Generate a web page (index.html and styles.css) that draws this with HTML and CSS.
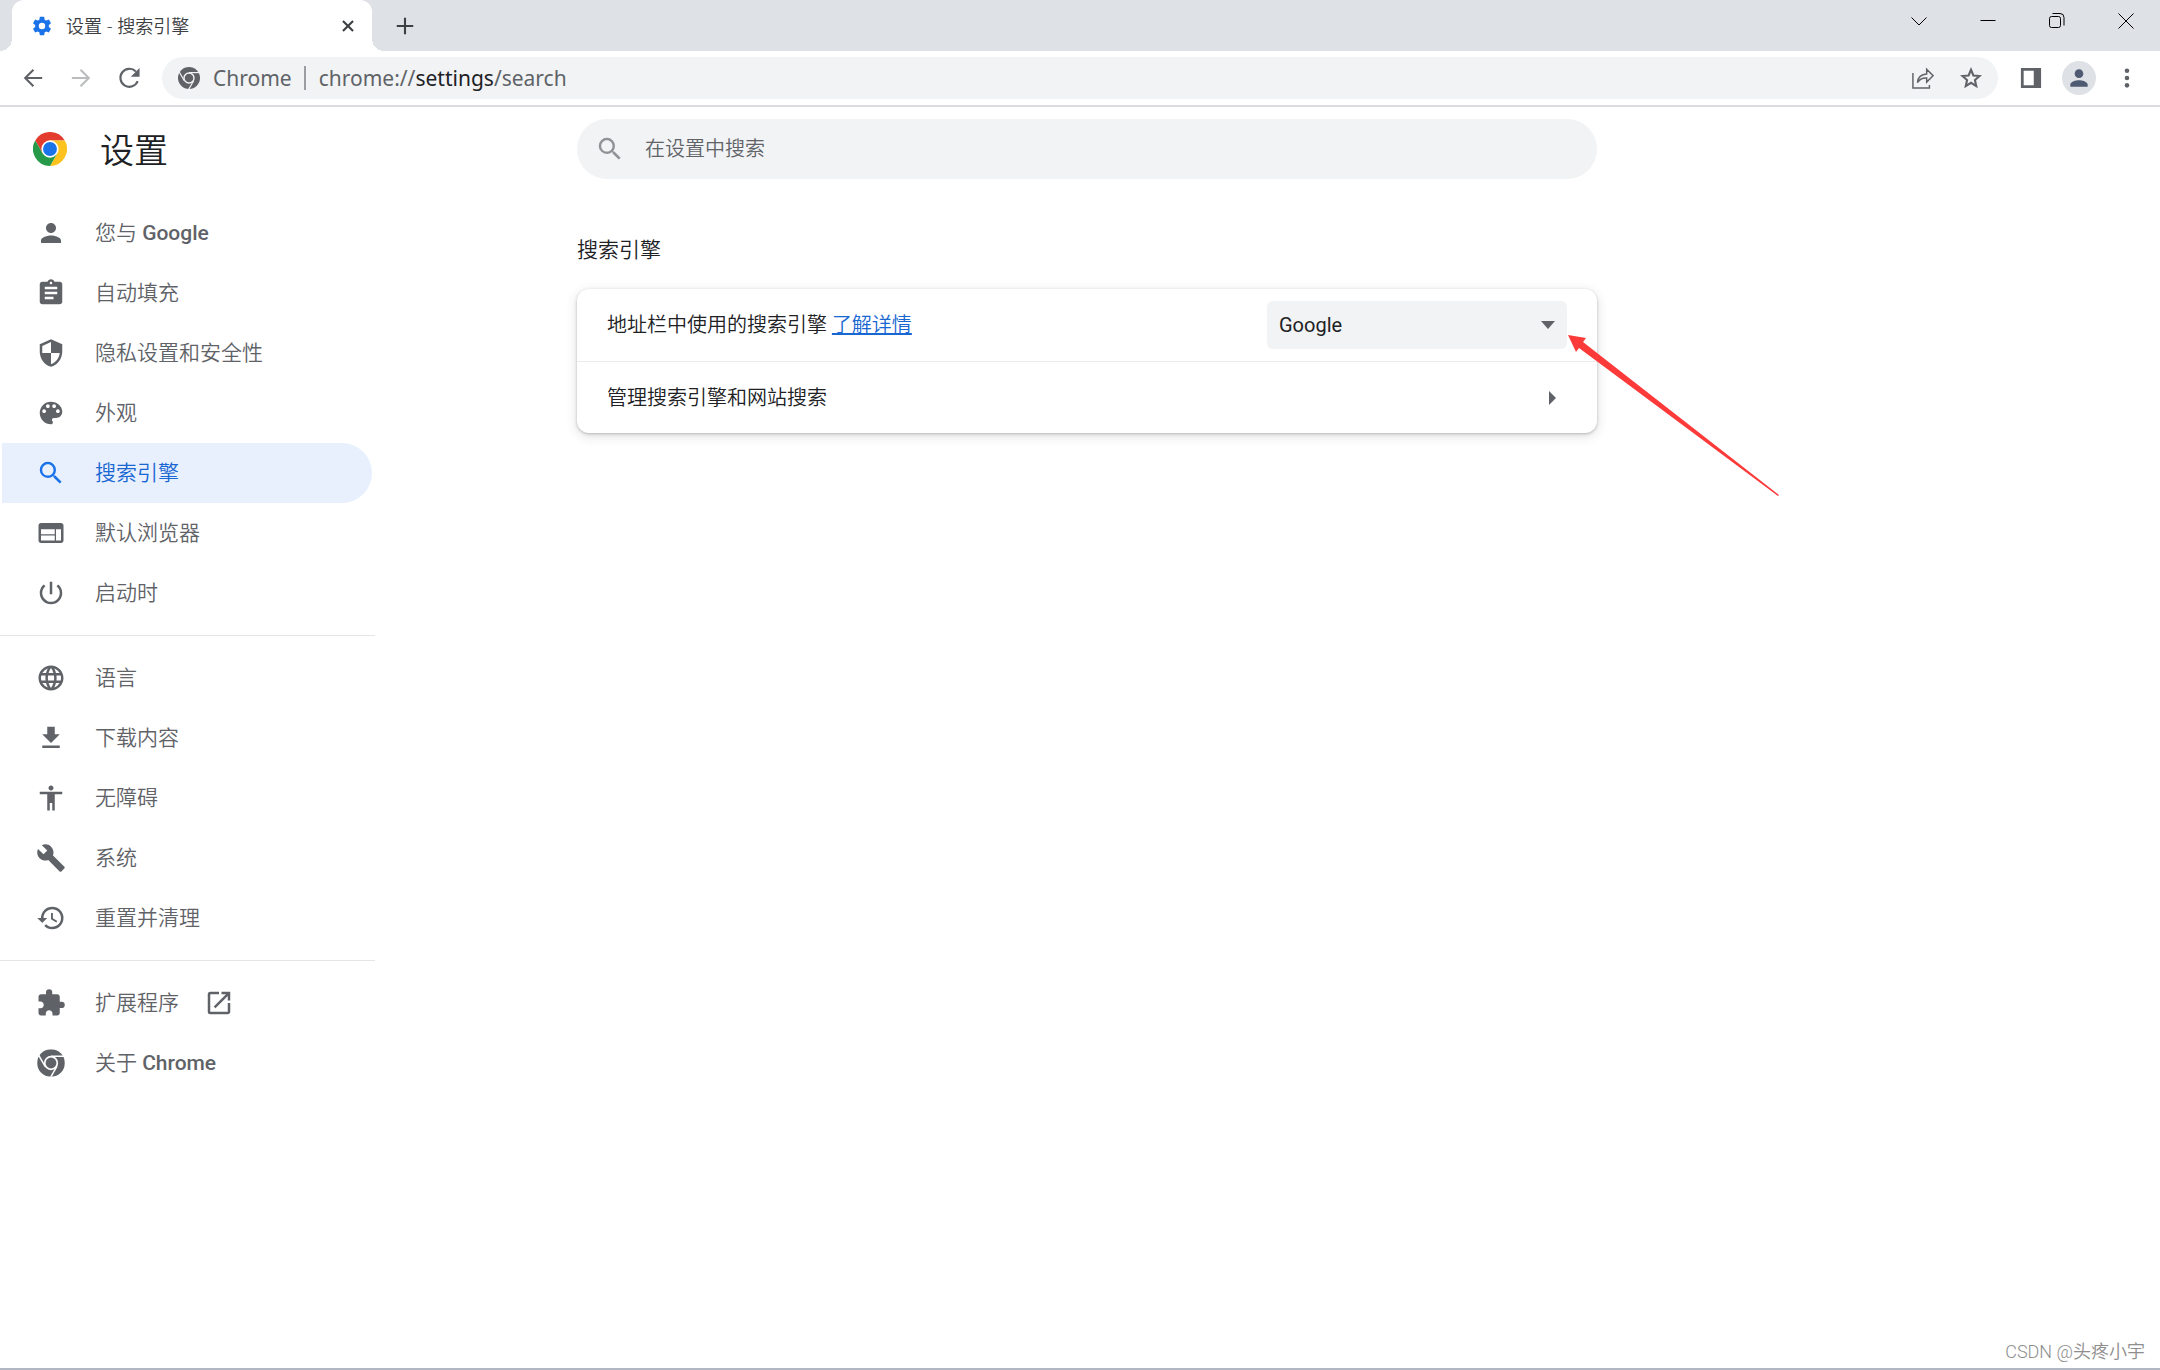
FILE: index.html
```html
<!DOCTYPE html>
<html lang="zh-CN">
<head>
<meta charset="utf-8">
<meta name="viewport" content="width=device-width, initial-scale=1">
<title>设置 - 搜索引擎</title>
<link rel="stylesheet" href="styles.css">
</head>
<body>
<svg class="defs" aria-hidden="true">
  <symbol id="search" viewBox="0 0 24 24"><path d="M15.5 14h-.79l-.28-.27A6.47 6.47 0 0 0 16 9.5 6.5 6.5 0 1 0 9.5 16c1.61 0 3.09-.59 4.23-1.57l.27.28v.79l5 4.99L20.49 19l-4.99-5zm-6 0C7.01 14 5 11.99 5 9.5S7.01 5 9.5 5 14 7.01 14 9.5 11.99 14 9.5 14z"/></symbol>
  <symbol id="person" viewBox="0 0 24 24"><path d="M12 12c2.21 0 4-1.79 4-4s-1.79-4-4-4-4 1.79-4 4 1.79 4 4 4zm0 2c-2.67 0-8 1.34-8 4v2h16v-2c0-2.66-5.33-4-8-4z"/></symbol>
  <symbol id="chrome-mono" viewBox="0 0 24 24">
    <circle cx="12" cy="12" r="12"/>
    <g class="gap"><circle cx="12" cy="12" r="6.2" stroke="none"/><path d="M12 6.1H24"/><path d="M12 6.1H24" transform="rotate(120 12 12)"/><path d="M12 6.1H24" transform="rotate(240 12 12)"/></g>
    <circle cx="12" cy="12" r="4.7"/>
  </symbol>
</svg>

<header class="browser">
  <div class="tabs">
    <div class="tab">
      <svg class="icon-22 gear" viewBox="0 0 24 24"><path d="M19.43 12.98c.04-.32.07-.64.07-.98s-.03-.66-.07-.98l2.11-1.65c.19-.15.24-.42.12-.64l-2-3.46c-.12-.22-.39-.3-.61-.22l-2.49 1c-.52-.4-1.08-.73-1.69-.98l-.38-2.65A.49.49 0 0 0 14 2h-4c-.25 0-.46.18-.49.42l-.38 2.65c-.61.25-1.17.59-1.69.98l-2.49-1c-.23-.09-.49 0-.61.22l-2 3.46c-.13.22-.07.49.12.64l2.11 1.65c-.04.32-.07.65-.07.98s.03.66.07.98l-2.11 1.65c-.19.15-.24.42-.12.64l2 3.46c.12.22.39.3.61.22l2.49-1c.52.4 1.08.73 1.69.98l.38 2.65c.03.24.24.42.49.42h4c.25 0 .46-.18.49-.42l.38-2.65c.61-.25 1.17-.59 1.69-.98l2.49 1c.23.09.49 0 .61-.22l2-3.46c.12-.22.07-.49-.12-.64l-2.11-1.65zM12 15.500a3.500 3.500 0 1 1 0-7 3.500 3.500 0 0 1 0 7z"/></svg>
      <span class="tab-title">设置 - 搜索引擎</span>
      <button class="bare tab-close" aria-label="关闭标签页"><svg class="icon-22" viewBox="0 0 24 24"><path class="line" d="M6.500 6.500l11 11M17.500 6.500l-11 11"/></svg></button>
    </div>
    <button class="bare new-tab" aria-label="新标签页"><svg class="icon-22" viewBox="0 0 24 24"><path class="line" d="M12 3v18M3 12h18"/></svg></button>
    <div class="window-buttons">
      <button class="bare" aria-label="搜索标签页"><svg viewBox="0 0 24 24"><path d="M4.500 8.500l7.500 7.500 7.500-7.500"/></svg></button>
      <button class="bare" aria-label="最小化"><svg viewBox="0 0 24 24"><path d="M4.500 11.500h15"/></svg></button>
      <button class="bare" aria-label="还原"><svg viewBox="0 0 24 24"><rect x="4.500" y="7.500" width="11" height="11" rx="2"/><path d="M7.500 4.500h7.500a4 4 0 0 1 4 4v8"/></svg></button>
      <button class="bare" aria-label="关闭"><svg viewBox="0 0 24 24"><path d="M4.500 4.500l15 15M19.500 4.500l-15 15"/></svg></button>
    </div>
  </div>
  <div class="toolbar">
    <button class="bare" aria-label="返回"><svg class="icon-22" viewBox="0 0 24 24"><path class="line" d="M22 12H3.500M12.500 3l-9 9 9 9"/></svg></button>
    <button class="bare forward" aria-label="前进"><svg class="icon-22" viewBox="0 0 24 24"><path class="line" d="M2 12h18.500M11.500 3l9 9-9 9"/></svg></button>
    <button class="bare" aria-label="重新加载"><svg class="icon-22" viewBox="0 0 24 24"><path class="line" d="M21.500 15.500A9.800 9.800 0 1 1 19.500 5"/><path d="M23.500 1v9.500H14z"/></svg></button>
    <div class="omnibox">
      <svg class="icon-22" viewBox="0 0 24 24"><use href="#chrome-mono"/></svg>
      <span class="site">Chrome</span>
      <div class="url" role="textbox" aria-label="地址栏" contenteditable="true" spellcheck="false">chrome://<span class="host">settings</span>/search</div>
      <button class="bare" aria-label="分享"><svg class="icon-22" viewBox="0 0 24 24"><path class="thin" d="M1 6.500V23h18v-3.500M6 17c.5-5.500 4-9 10-9.300V2.500l7 7-7 7V12c-4-.3-7.500 1-10 5z"/></svg></button>
      <button class="bare" aria-label="为此标签页添加书签"><svg class="icon-22" viewBox="0 0 24 24"><path class="line" d="M12 3l2.600 6.200 6.700.600-5 4.400 1.400 6.600-5.700-3.500-5.700 3.500 1.400-6.600-5-4.400 6.700-.6z"/></svg></button>
    </div>
    <button class="bare" aria-label="侧边栏"><svg class="icon-22" viewBox="0 0 24 24"><path fill-rule="evenodd" d="M1 1h22v22H1zM4 4v16h11V4z"/></svg></button>
    <button class="bare" aria-label="您"><svg class="avatar"><use href="#person"/></svg></button>
    <button class="bare" aria-label="自定义及控制"><svg class="icon-22" viewBox="0 0 24 24"><circle cx="12" cy="4" r="2.500"/><circle cx="12" cy="12" r="2.500"/><circle cx="12" cy="20" r="2.500"/></svg></button>
  </div>
</header>

<div class="page">
  <aside class="sidebar">
    <div class="brand">
      <svg class="logo" viewBox="0 0 24 24">
        <path fill="#e33b2e" d="M1.600 6a12 12 0 0 1 20.800 0H12L6.800 15z"/>
        <path fill="#fcc31e" d="M22.400 6A12 12 0 0 1 12 24l5.200-9L12 6z"/>
        <path fill="#269a49" d="M12 24A12 12 0 0 1 1.600 6l5.200 9h10.400z"/>
        <circle cx="12" cy="12" r="6.100" fill="#fff"/><circle cx="12" cy="12" r="4.900" fill="#1a73e8"/>
      </svg>
      <h1>设置</h1>
    </div>
    <nav aria-label="设置">
      <ul>
        <li><a href="#people"><svg class="icon-30"><use href="#person"/></svg><span>您与 <b>Google</b></span></a></li>
        <li><a href="#autofill"><svg class="icon-30" viewBox="0 0 24 24"><path d="M19 3h-4.180C14.400 1.840 13.300 1 12 1c-1.300 0-2.400.84-2.820 2H5c-1.100 0-2 .9-2 2v14c0 1.100.9 2 2 2h14c1.100 0 2-.9 2-2V5c0-1.100-.9-2-2-2zm-7 0c.55 0 1 .45 1 1s-.45 1-1 1-1-.45-1-1 .45-1 1-1zm2 14H7v-2h7v2zm3-4H7v-2h10v2zm0-4H7V7h10v2z"/></svg><span>自动填充</span></a></li>
        <li><a href="#privacy"><svg class="icon-30" viewBox="0 0 24 24"><path d="M12 1L3 5v6c0 5.550 3.840 10.740 9 12 5.160-1.260 9-6.450 9-12V5l-9-4zm0 10.990h7c-.53 4.120-3.280 7.790-7 8.940V12H5V6.300l7-3.110v8.800z"/></svg><span>隐私设置和安全性</span></a></li>
        <li><a href="#appearance"><svg class="icon-30" viewBox="0 0 24 24"><path d="M12 3a9 9 0 0 0 0 18c.83 0 1.500-.67 1.500-1.500 0-.39-.15-.74-.39-1.010-.23-.26-.38-.61-.38-.99 0-.83.67-1.500 1.500-1.500H16c2.760 0 5-2.240 5-5 0-4.420-4.030-8-9-8zm-5.500 9c-.83 0-1.500-.67-1.500-1.500S5.670 9 6.500 9 8 9.670 8 10.500 7.330 12 6.500 12zm3-4C8.670 8 8 7.330 8 6.500S8.670 5 9.500 5s1.500.67 1.500 1.500S10.330 8 9.500 8zm5 0c-.83 0-1.500-.67-1.500-1.500S13.670 5 14.500 5s1.500.67 1.500 1.500S15.330 8 14.500 8zm3 4c-.83 0-1.500-.67-1.500-1.500S16.670 9 17.500 9s1.500.67 1.500 1.500-.67 1.500-1.500 1.500z"/></svg><span>外观</span></a></li>
        <li><a class="selected" href="#search-engine" aria-current="page"><svg class="icon-30"><use href="#search"/></svg><span>搜索引擎</span></a></li>
        <li><a href="#default-browser"><svg class="icon-30" viewBox="0 0 24 24"><path d="M20 4H4c-1.100 0-1.990.9-1.990 2L2 18c0 1.100.9 2 2 2h16c1.100 0 2-.9 2-2V6c0-1.100-.9-2-2-2zm-5 14H4v-4h11v4zm0-5H4V9h11v4zm5 5h-4V9h4v9z"/></svg><span>默认浏览器</span></a></li>
        <li><a href="#startup"><svg class="icon-30" viewBox="0 0 24 24"><path d="M13 3h-2v10h2V3zm4.830 2.170l-1.420 1.420A6.920 6.920 0 0 1 19 12a7 7 0 1 1-11.420-5.420L6.170 5.170A8.930 8.930 0 0 0 3 12a9 9 0 0 0 18 0c0-2.740-1.230-5.180-3.170-6.830z"/></svg><span>启动时</span></a></li>
      </ul>
      <ul>
        <li><a href="#languages"><svg class="icon-30" viewBox="0 0 24 24"><path d="M11.990 2C6.470 2 2 6.480 2 12s4.470 10 9.990 10C17.520 22 22 17.520 22 12S17.520 2 11.990 2zm6.930 6h-2.950a15.650 15.650 0 0 0-1.380-3.560A8.030 8.030 0 0 1 18.920 8zM12 4.040c.83 1.200 1.480 2.530 1.910 3.960h-3.820c.43-1.430 1.080-2.760 1.910-3.960zM4.260 14C4.100 13.360 4 12.690 4 12s.1-1.360.26-2h3.380c-.08.66-.14 1.320-.14 2 0 .68.06 1.340.14 2H4.260zm.82 2h2.950c.32 1.250.78 2.450 1.380 3.560A7.990 7.990 0 0 1 5.080 16zm2.950-8H5.080a7.990 7.990 0 0 1 4.330-3.560A15.650 15.650 0 0 0 8.030 8zM12 19.960c-.83-1.200-1.480-2.530-1.910-3.960h3.820c-.43 1.430-1.080 2.760-1.910 3.960zM14.340 14H9.660c-.09-.66-.16-1.320-.16-2 0-.68.07-1.350.16-2h4.680c.09.65.16 1.320.16 2 0 .68-.07 1.340-.16 2zm.25 5.560c.6-1.110 1.060-2.310 1.380-3.560h2.950a8.030 8.030 0 0 1-4.330 3.560zM16.360 14c.08-.66.14-1.320.14-2 0-.68-.06-1.340-.14-2h3.380c.16.64.26 1.310.26 2s-.1 1.360-.26 2h-3.380z"/></svg><span>语言</span></a></li>
        <li><a href="#downloads"><svg class="icon-30" viewBox="0 0 24 24"><path d="M19 9h-4V3H9v6H5l7 7 7-7zM5 18v2h14v-2H5z"/></svg><span>下载内容</span></a></li>
        <li><a href="#accessibility"><svg class="icon-30" viewBox="0 0 24 24"><path d="M12 2c1.100 0 2 .9 2 2s-.9 2-2 2-2-.9-2-2 .9-2 2-2zm9 7h-6v13h-2v-6h-2v6H9V9H3V7h18v2z"/></svg><span>无障碍</span></a></li>
        <li><a href="#system"><svg class="icon-30" viewBox="0 0 24 24"><path d="M22.700 19l-9.100-9.100c.9-2.300.4-5-1.500-6.900-2-2-5-2.400-7.400-1.300L9 6 6 9 1.600 4.700C.4 7.100.9 10.100 2.900 12.100c1.900 1.900 4.600 2.400 6.900 1.500l9.100 9.100c.4.400 1 .4 1.400 0l2.300-2.300c.5-.4.5-1.100.1-1.400z"/></svg><span>系统</span></a></li>
        <li><a href="#reset"><svg class="icon-30" viewBox="0 0 24 24"><path d="M13 3a9 9 0 0 0-9 9H1l3.890 3.890.07.14L9 12H6c0-3.870 3.130-7 7-7s7 3.130 7 7-3.130 7-7 7c-1.930 0-3.680-.79-4.940-2.060l-1.420 1.420A8.950 8.950 0 0 0 13 21a9 9 0 0 0 0-18zm-1 5v5l4.280 2.540.72-1.210-3.500-2.080V8H12z"/></svg><span>重置并清理</span></a></li>
      </ul>
      <ul>
        <li><a href="#extensions"><svg class="icon-30" viewBox="0 0 24 24"><path d="M20.500 11H19V7c0-1.100-.9-2-2-2h-4V3.500a2.500 2.500 0 0 0-5 0V5H4c-1.100 0-1.990.9-1.990 2v3.800H3.500c1.490 0 2.700 1.210 2.700 2.700s-1.210 2.700-2.700 2.700H2V20c0 1.100.9 2 2 2h3.800v-1.500c0-1.490 1.210-2.700 2.700-2.700 1.490 0 2.700 1.210 2.700 2.700V22H17c1.100 0 2-.9 2-2v-4h1.500a2.500 2.500 0 0 0 0-5z"/></svg><span>扩展程序</span><svg class="icon-30 external" viewBox="0 0 24 24"><path d="M19 19H5V5h7V3H5a2 2 0 0 0-2 2v14a2 2 0 0 0 2 2h14c1.100 0 2-.9 2-2v-7h-2v7zM14 3v2h3.590l-9.830 9.830 1.410 1.410L19 6.410V10h2V3h-7z"/></svg></a></li>
        <li><a href="#about"><svg class="icon-30" viewBox="-1 -1 26 26"><use href="#chrome-mono" width="24" height="24"/></svg><span>关于 <b>Chrome</b></span></a></li>
      </ul>
    </nav>
  </aside>

  <main>
    <label class="search-box">
      <svg class="icon-30"><use href="#search"/></svg>
      <input type="search" placeholder="在设置中搜索" aria-label="在设置中搜索">
    </label>
    <h2 id="search-engine">搜索引擎</h2>
    <section class="card" aria-labelledby="search-engine">
      <div class="row">
        <span><label for="engine">地址栏中使用的搜索引擎</label> <a href="#learn-more">了解详情</a></span>
        <div class="select">
          <select id="engine"><option>Google</option></select>
          <svg class="caret" viewBox="0 0 14 8"><path d="M0 0h14L7 8z"/></svg>
        </div>
        <svg class="pointer" viewBox="0 0 212 162" aria-hidden="true"><path d="M0 0l18 3-3 4 196 153-1 1L11 13l-3 4z"/></svg>
      </div>
      <a class="row link-row" href="#manage"><span>管理搜索引擎和网站搜索</span><svg class="chevron" viewBox="0 0 7 14"><path d="M0 0l7 7-7 7z"/></svg></a>
    </section>
  </main>
</div>
<div class="watermark">CSDN @头疼小宇</div>
</body>
</html>
```
FILE: styles.css
```css
:root {
  --grey: #5f6368;
  --field: #f1f3f4;
  --blue: #1a73e8;
  --link: #1967d2;
  --ink: #202124;
  --gap-color: #fff;
}

* { box-sizing: border-box; }

body {
  margin: 0;
  min-height: 100vh;
  position: relative;
  border-bottom: 2px solid #b1b8c4;
  background: #fff;
  color: var(--ink);
  font-family: Roboto, "Noto Sans CJK SC", sans-serif;
  font-size: 20px;
  font-weight: 350;
  line-height: 30px;
}

svg { display: block; flex: none; fill: currentColor; }
.defs { position: absolute; width: 0; height: 0; }
.icon-22 { width: 22px; height: 22px; }
.icon-30 { width: 30px; height: 30px; }
.gap { fill: var(--gap-color); stroke: var(--gap-color); stroke-width: 1.3px; }
.line { fill: none; stroke: currentColor; stroke-width: 2.3px; }
.thin { fill: none; stroke: currentColor; stroke-width: 1.6px; }

.bare {
  display: flex;
  align-items: center;
  justify-content: center;
  flex: none;
  width: 48px;
  height: 42px;
  padding: 0;
  border: 0;
  background: none;
  color: inherit;
}

/* Tab strip */
.tabs {
  display: flex;
  height: 51px;
  padding-left: 12px;
  background: #dee1e6;
}
.tab {
  position: relative;
  display: flex;
  align-items: center;
  width: 360px;
  padding: 0 12px 0 19px;
  border-radius: 12px 12px 0 0;
  background: #fff;
  color: #3c4043;
  font-family: "Open Sans", "Noto Sans CJK SC", sans-serif;
  font-size: 18px;
}
.tab::before,
.tab::after {
  content: "";
  position: absolute;
  bottom: 0;
  width: 12px;
  height: 12px;
}
.tab::before { right: 100%; background: radial-gradient(circle at 0 0, transparent 12px, #fff 12px); }
.tab::after { left: 100%; background: radial-gradient(circle at 100% 0, transparent 12px, #fff 12px); }
.gear { color: var(--blue); }
.tab-title { flex: 1; margin-left: 13px; }
.tab-close { width: 24px; }
.new-tab { width: 66px; height: 51px; color: #3c4043; }
.window-buttons { display: flex; margin-left: auto; }
.window-buttons .bare { width: 69px; height: 42px; color: #000; }
.window-buttons svg { width: 24px; height: 24px; fill: none; stroke: currentColor; stroke-width: 1px; }

/* Toolbar */
.toolbar {
  display: flex;
  align-items: center;
  height: 56px;
  padding: 0 9px;
  border-bottom: 2px solid #dadce0;
  color: var(--grey);
}
.toolbar .forward { color: #babcbe; }
.omnibox {
  --gap-color: var(--field);
  display: flex;
  flex: 1;
  align-items: center;
  min-width: 0;
  height: 42px;
  margin: 0 9px;
  padding: 0 3px 0 16px;
  border-radius: 21px;
  background: var(--field);
  font-family: "Noto Sans", "Noto Sans CJK SC", sans-serif;
  font-size: 21px;
  font-weight: 400;
}
.site {
  margin-left: 13px;
  padding-right: 12px;
  border-right: 2px solid #9a9da1;
  line-height: 24px;
}
.url { flex: 1; margin-left: 13px; white-space: nowrap; overflow: hidden; }
.host { color: var(--ink); }
.avatar {
  width: 34px;
  height: 34px;
  padding: 4px;
  border-radius: 50%;
  background: #dee1e6;
  color: #4f5b73;
}

/* Page grid: sidebar, then a column that keeps its place in the free space */
.page { display: grid; grid-template-columns: 400px minmax(0, 1fr); }
main {
  display: grid;
  grid-template-columns: minmax(24px, 177fr) minmax(0, 1020px) minmax(24px, 563fr);
  align-content: start;
  padding-top: 12px;
}
main > * { grid-column: 2; }

/* Sidebar */
.brand { display: flex; align-items: center; height: 84px; padding-left: 33px; gap: 33px; }
.logo { width: 34px; height: 34px; }
h1 { margin: 0; padding-top: 4px; font-size: 34px; font-weight: 350; line-height: 48px; }
nav { padding-top: 12px; }
ul { margin: 0; padding: 0; list-style: none; }
ul + ul {
  width: 375px;
  margin-top: 12px;
  padding-top: 12px;
  border-top: 1px solid #e4e5e7;
}
nav a {
  display: flex;
  align-items: center;
  width: 370px;
  height: 60px;
  margin-left: 2px;
  padding-left: 34px;
  border-radius: 0 30px 30px 0;
  color: var(--grey);
  font-size: 21px;
  text-decoration: none;
}
nav a span { margin-left: 29px; }
nav b { font-weight: 500; }
nav .selected { background: #e8f0fe; color: var(--blue); }
nav .selected span { color: var(--link); }
nav .external { margin-left: 25px; }

/* Main column */
.search-box {
  display: flex;
  align-items: center;
  height: 60px;
  padding: 0 24px 0 18px;
  border-radius: 30px;
  background: var(--field);
  color: #8f9296;
}
.search-box input {
  flex: 1;
  min-width: 0;
  margin-left: 20px;
  padding: 0;
  border: 0;
  outline: 0;
  background: none;
  color: var(--ink);
  font: inherit;
}
.search-box input::placeholder { color: var(--grey); opacity: 1; }
h2 { margin: 56px 0 24px; font-size: 21px; font-weight: 350; line-height: 30px; }
.card {
  border-radius: 12px;
  background: #fff;
  box-shadow: 0 1px 3px rgba(60, 64, 67, .3), 0 3px 12px rgba(60, 64, 67, .16);
}
.row {
  position: relative;
  display: flex;
  align-items: center;
  justify-content: space-between;
  height: 72px;
  padding: 0 30px;
}
.row a { color: var(--link); }
.link-row { border-top: 1px solid #ebebeb; padding-right: 41px; color: inherit; text-decoration: none; }
.card .link-row { color: var(--ink); }
.chevron { width: 7px; height: 14px; color: var(--grey); }
.select { display: grid; align-items: center; width: 300px; }
.select > * { grid-area: 1 / 1; }
.select select {
  height: 48px;
  padding: 0 12px;
  border: 0;
  border-radius: 6px;
  appearance: none;
  background: var(--field);
  color: var(--ink);
  font: inherit;
  font-weight: 400;
}
.caret { justify-self: end; width: 14px; height: 8px; margin-right: 12px; color: var(--grey); pointer-events: none; }

/* Annotation drawn over the card */
.pointer { position: absolute; z-index: 1; top: 46px; left: calc(100% - 29px); width: 212px; height: 162px; color: #fc3a3a; pointer-events: none; }
.watermark { position: absolute; right: 15px; bottom: 1px; color: #8e8e8e; font-size: 18px; }
```
